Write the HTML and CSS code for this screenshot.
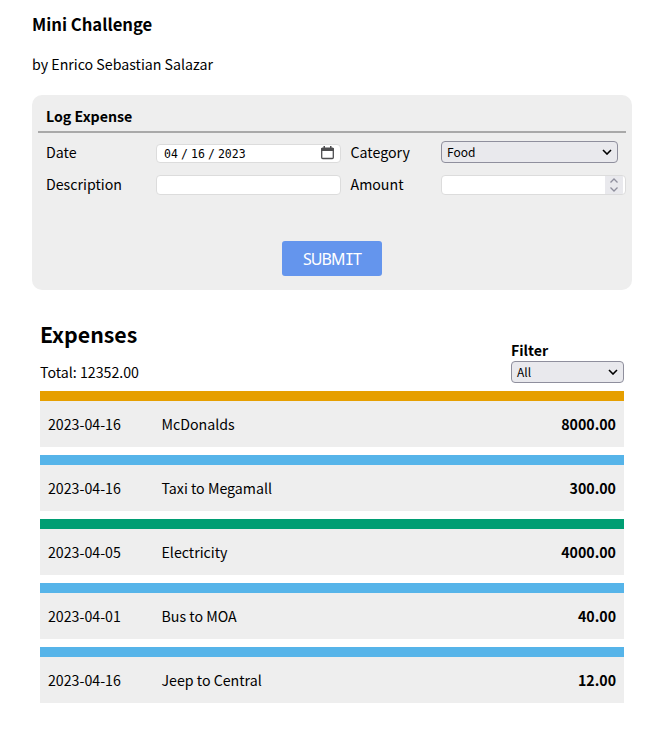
FILE: index.html
```html
<!DOCTYPE html>
<html lang="en">
<head>
<meta charset="utf-8">
<title>Mini Challenge</title>
<link rel="stylesheet" href="styles.css">
</head>
<body>
<header class="intro">
  <h3 class="title">Mini Challenge</h3>
  <p class="author">by Enrico Sebastian Salazar</p>
</header>
<section class="card">
  <h4 class="card-title">Log Expense</h4>
  <div class="fields">
    <span class="label">Date</span>
    <div class="input date"><span class="date-text"><span>04</span><span>/</span><span>16</span><span>/</span><span>2023</span></span>
      <svg width="13" height="14" viewBox="0 0 13 14"><path d="M.7 3h11.6v8.5a1 1 0 0 1-1 1H1.7a1 1 0 0 1-1-1z" fill="none" stroke="#4e4e50" stroke-width="1.3"/><path d="M0 3a1.5 1.5 0 0 1 1.500-1.500h10A1.500 1.500 0 0 1 13 3v2H0zM2.500 0H4v3H2.500zM9 0h1.500v3H9z" fill="#4e4e50"/></svg>
    </div>
    <span class="label">Category</span>
    <div class="select category"><span>Food</span><svg width="10" height="6" viewBox="0 0 10 6"><path d="M1 1l4 4 4-4" fill="none" stroke="#000" stroke-width="1.6"/></svg></div>
    <span class="label">Description</span>
    <div class="input"></div>
    <span class="label">Amount</span>
    <div class="input number"><div class="spinner"><svg width="10" height="14" viewBox="0 0 10 14"><path d="M1.5 4.5L5 1l3.500 3.500M1.500 9.500L5 13l3.500-3.500" fill="none" stroke="#8f8f9d" stroke-width="1.3"/></svg></div></div>
  </div>
  <button class="submit">SUBM<span class="serif-i">I</span>T</button>
</section>
<section class="expenses">
  <div class="summary">
    <div>
      <h2 class="heading">Expenses</h2>
      <p class="total">Total: 12352.00</p>
    </div>
    <div class="filter">
      <span class="filter-label">Filter</span>
      <div class="select"><span>All</span><svg width="10" height="6" viewBox="0 0 10 6"><path d="M1 1l4 4 4-4" fill="none" stroke="#000" stroke-width="1.6"/></svg></div>
    </div>
  </div>
  <div class="list">
    <div class="row food"><span>2023-04-16</span><span>McDonalds</span><b>8000.00</b></div>
    <div class="row transport"><span>2023-04-16</span><span>Taxi to Megamall</span><b>300.00</b></div>
    <div class="row bills"><span>2023-04-05</span><span>Electricity</span><b>4000.00</b></div>
    <div class="row transport"><span>2023-04-01</span><span>Bus to MOA</span><b>40.00</b></div>
    <div class="row transport"><span>2023-04-16</span><span>Jeep to Central</span><b>12.00</b></div>
  </div>
</section>
</body>
</html>
```
FILE: styles.css
```css
* { box-sizing: border-box; }
body {
  margin: 0;
  padding: 12px 31px 0 32px;
  background: #fff;
  color: #000;
  font: 14.2px/24px "Noto Sans CJK SC", sans-serif;
}
h2, h3, h4, p { margin: 0; }
svg { display: block; flex: none; }
.title { font-size: 16.65px; line-height: 24px; }
.author { margin-top: 16px; }
.card {
  height: 195px;
  margin-top: 19px;
  padding: 9px 6px 0;
  border-radius: 10px;
  background: #eee;
}
.card-title {
  height: 29px;
  padding-left: 8px;
  border-bottom: 2px solid #a9a9a9;
  font-size: 14.2px;
  line-height: 24px;
}
.fields {
  display: grid;
  grid-template-columns: 110px 185px 9.5px 90.5px 185px;
  grid-template-rows: 32px 32px;
  align-items: center;
  padding: 4px 0 0 8px;
}
.fields > :nth-child(4n + 3) { grid-column: 4; }
.fields > :nth-child(4n + 4) { grid-column: 5; }
.label { padding-bottom: 2px; }
.input {
  height: 20px;
  border: 1px solid #dcdcdc;
  border-radius: 4px;
  background: #fff;
}
.date {
  display: flex;
  align-items: center;
  justify-content: space-between;
  height: 19px;
  margin-top: 1px;
  padding: 0 6px 0 7px;
}
.date-text {
  display: flex;
  gap: 3px;
  padding-top: 1px;
  font: 11.5px/17px "DejaVu Sans Mono", monospace;
  letter-spacing: 0.05px;
}
.date svg { margin-top: -1px; }
.number { display: flex; justify-content: flex-end; padding-right: 2px; }
.spinner {
  display: grid;
  place-items: center;
  width: 18px;
  background: #e9e9ed;
}
.select {
  display: flex;
  align-items: center;
  justify-content: space-between;
  height: 22px;
  padding: 0 5px 0 5px;
  border: 1px solid #8f8f9d;
  border-radius: 4px;
  background: #e9e9ed;
  font-size: 12px;
  line-height: 20px;
}
.category { width: 177px; margin-top: -2px; }
.submit {
  display: block;
  width: 100px;
  height: 35px;
  margin: 40px auto 0;
  padding: 2px 0 0;
  border: 0;
  border-radius: 3px;
  background: #6495ed;
  color: #fff;
  font: 16px/33px "Noto Sans", sans-serif;
  letter-spacing: -0.9px;
}
.serif-i { font-family: "DejaVu Sans Mono", monospace; font-size: 15.5px; line-height: 1; }
.expenses { padding: 28px 8px 0; }
.summary { display: flex; justify-content: space-between; align-items: flex-end; height: 65px; }
.heading { font-size: 21.3px; line-height: 34px; margin-bottom: 9px; }
.total { line-height: 24px; margin-bottom: -1px; }
.filter { width: 113px; }
.filter-label { display: block; font-weight: 700; line-height: 22px; }
.list { display: grid; gap: 8px; margin-top: 8px; }
.row {
  display: grid;
  grid-template-columns: 113.5px 1fr auto;
  align-items: center;
  height: 56px;
  padding: 0 8px;
  border-top: 10px solid #56b4e9;
  background: #eee;
}
.food { border-color: #e69f00; }
.bills { border-color: #009e73; }
```
